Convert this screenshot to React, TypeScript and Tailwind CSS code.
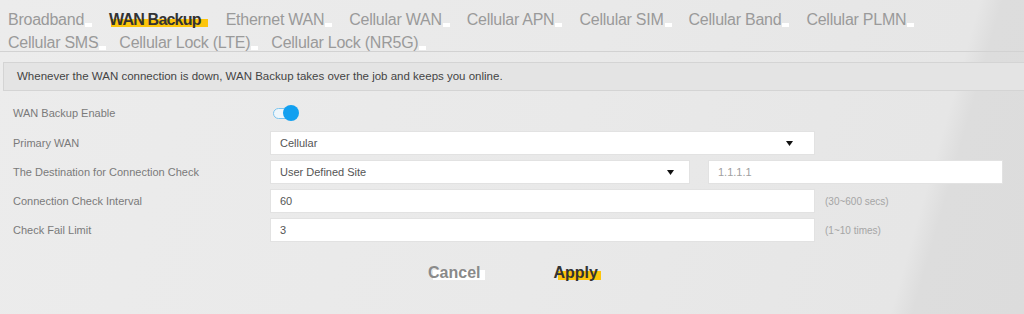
import { useState } from "react";

const tabRows = [
  {
    gap: "gap-x-[25px]",
    items: [
      "Broadband",
      "WAN Backup",
      "Ethernet WAN",
      "Cellular WAN",
      "Cellular APN",
      "Cellular SIM",
      "Cellular Band",
      "Cellular PLMN",
    ],
  },
  {
    gap: "gap-x-[21px]",
    items: ["Cellular SMS", "Cellular Lock (LTE)", "Cellular Lock (NR5G)"],
  },
];

const Arrow = () => (
  <svg width="7" height="5" viewBox="0 0 7 5" className="shrink-0">
    <path d="M0 0h7L3.5 5z" fill="#111" />
  </svg>
);

const Tab = ({ label, active }: { label: string; active: boolean }) => (
  <span className="relative inline-block whitespace-nowrap">
    {active ? (
      <span className="absolute left-[2px] -right-[7px] top-[11px] h-[8px] bg-[#fdc50b]" />
    ) : (
      <span className="absolute -right-[8px] top-[15px] w-[7px] h-[4px] bg-white" />
    )}
    <span
      className={
        active
          ? "relative font-bold text-[#333] tracking-[-0.8px]"
          : "relative text-[#9a9a9a] tracking-[-0.25px]"
      }
    >
      {label}
    </span>
  </span>
);

const Row = ({
  label,
  children,
}: {
  label: string;
  children: React.ReactNode;
}) => (
  <div className="flex items-center h-[24px]">
    <div className="w-[270px] shrink-0 pl-[13px] text-[11px] text-[#7a7a7a]">{label}</div>
    {children}
  </div>
);

const App = () => {
  const [enabled, setEnabled] = useState<boolean>(true);

  return (
    <main className="w-[1024px] h-[314px] overflow-hidden font-['Liberation_Sans',sans-serif] bg-[linear-gradient(106deg,#ececec_0%,#e9e9e9_55%,#e6e6e6_88%,#dddddd_90%,#dcdcdc_100%)]">
      <nav className="h-[52px] pt-[8px] pl-[8px] border-b border-[#d2d2d2] flex flex-col text-[16px] leading-[23px]">
        {tabRows.map((row, i) => (
          <div key={i} className={`flex ${row.gap}`}>
            {row.items.map((t) => (
              <Tab key={t} label={t} active={t === "WAN Backup"} />
            ))}
          </div>
        ))}
      </nav>

      <section className="mt-[10px] ml-[3px] -mr-[2px] h-[29px] flex items-center pl-[13px] bg-[#e4e4e4] border border-[#d4d4d4] text-[11.5px] text-[#444]">
        Whenever the WAN connection is down, WAN Backup takes over the job and
        keeps you online.
      </section>

      <section className="mt-[10px] flex flex-col gap-[5px]">
        <div className="flex items-center h-[24px] mb-[1px]">
          <div className="w-[270px] shrink-0 pl-[13px] text-[11px] text-[#7a7a7a]">
            WAN Backup Enable
          </div>
          <button
            onClick={() => setEnabled(!enabled)}
            className="relative ml-[3px] w-[27px] h-[16px] flex items-center"
          >
            <span className="absolute left-0 w-[20px] h-[11px] rounded-full border border-[#7cc4ee] bg-[#eef6fb]" />
            <span
              className={
                enabled
                  ? "absolute left-[10px] w-[16px] h-[16px] rounded-full bg-[#12a0f0]"
                  : "absolute left-0 w-[16px] h-[16px] rounded-full bg-[#bbb]"
              }
            />
          </button>
        </div>

        <Row label="Primary WAN">
          <div className="w-[545px] h-[24px] bg-white border border-[#e2e2e2] flex items-center justify-between pl-[9px] pr-[21px] text-[11px] text-[#555]">
            Cellular
            <Arrow />
          </div>
        </Row>

        <Row label="The Destination for Connection Check">
          <div className="w-[420px] h-[24px] bg-white border border-[#e2e2e2] flex items-center justify-between pl-[9px] pr-[15px] text-[11px] text-[#555]">
            User Defined Site
            <Arrow />
          </div>
          <div className="ml-[18px] w-[295px] h-[24px] bg-white border border-[#e2e2e2] flex items-center pl-[9px] text-[11px] text-[#a0a0a0]">
            1.1.1.1
          </div>
        </Row>

        <Row label="Connection Check Interval">
          <div className="w-[545px] h-[24px] bg-white border border-[#e2e2e2] flex items-center pl-[9px] text-[11px] text-[#555]">
            60
          </div>
          <span className="ml-[10px] text-[10px] text-[#a5a5a5]">(30~600 secs)</span>
        </Row>

        <Row label="Check Fail Limit">
          <div className="w-[545px] h-[24px] bg-white border border-[#e2e2e2] flex items-center pl-[9px] text-[11px] text-[#555]">
            3
          </div>
          <span className="ml-[10px] text-[10px] text-[#a5a5a5]">(1~10 times)</span>
        </Row>
      </section>

      <div className="mt-[19px] flex justify-center gap-[73px] text-[16px] font-bold pl-[2px]">
        <button className="relative">
          <span className="absolute left-[5px] -right-[4px] top-[9px] h-[10px] bg-white" />
          <span className="relative text-[#8a8a8a]">Cancel</span>
        </button>
        <button className="relative">
          <span className="absolute left-[4px] -right-[3px] top-[10px] h-[9px] bg-[#fdc50b]" />
          <span className="relative text-[#333]">Apply</span>
        </button>
      </div>
    </main>
  );
};

export default App;
